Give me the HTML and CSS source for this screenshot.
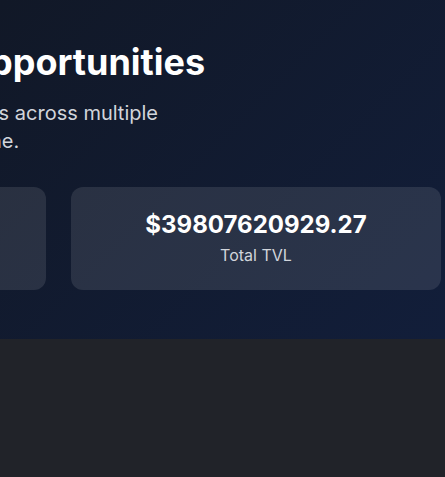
FILE: index.html
```html
<!DOCTYPE html>
<html lang="en">
<head>
<meta charset="utf-8">
<title>Yield Opportunities</title>
<link rel="stylesheet" href="styles.css">
</head>
<body>
<section class="hero">
  <div class="hero-inner">
    <h1 class="hero-title">Yield Opportunities</h1>
    <p class="hero-text">Compare yields across multiple protocols in one.</p>
    <div class="stats">
      <div class="stat-card">
        <div class="stat-value">12,483</div>
        <div class="stat-label">Total Pools</div>
      </div>
      <div class="stat-card">
        <div class="stat-value">$39807620929.27</div>
        <div class="stat-label">Total TVL</div>
      </div>
      <div class="stat-card">
        <div class="stat-value">5.42%</div>
        <div class="stat-label">Average APY</div>
      </div>
    </div>
  </div>
</section>
<section class="content"></section>
</body>
</html>
```
FILE: styles.css
```css
* { box-sizing: border-box; }
html, body { margin: 0; padding: 0; }
body {
  font-family: Inter, "Noto Sans", sans-serif;
  background: #212329;
  overflow: hidden;
  width: 445px;
  height: 477px;
}
.hero {
  background: linear-gradient(135deg, #111827 0%, #121e3a 100%);
  height: 339px;
  padding-top: 42px;
  overflow: hidden;
}
.hero-inner {
  margin-left: -135.5px;
  width: 1200px;
}
.hero-title {
  margin: 0;
  font-size: 36px;
  line-height: 40px;
  font-weight: 700;
  color: #ffffff;
  white-space: nowrap;
}
.hero-text {
  margin: 17px 0 0 -3px;
  width: 300px;
  font-size: 20px;
  line-height: 28px;
  color: #d1d5db;
}
.stats {
  margin-top: 32px;
  display: grid;
  grid-template-columns: repeat(3, 370px);
  gap: 25px;
  margin-left: -188.5px;
}
.stat-card {
  background: rgba(255, 255, 255, 0.1);
  border-radius: 12px;
  padding: 22px 16px 23px;
  text-align: center;
}
.stat-value {
  font-size: 24px;
  line-height: 32px;
  font-weight: 700;
  color: #ffffff;
}
.stat-label {
  margin-top: 2px;
  font-size: 16px;
  line-height: 24px;
  color: #d1d5db;
}
.content {
  height: 138px;
  background: #212329;
}
```
